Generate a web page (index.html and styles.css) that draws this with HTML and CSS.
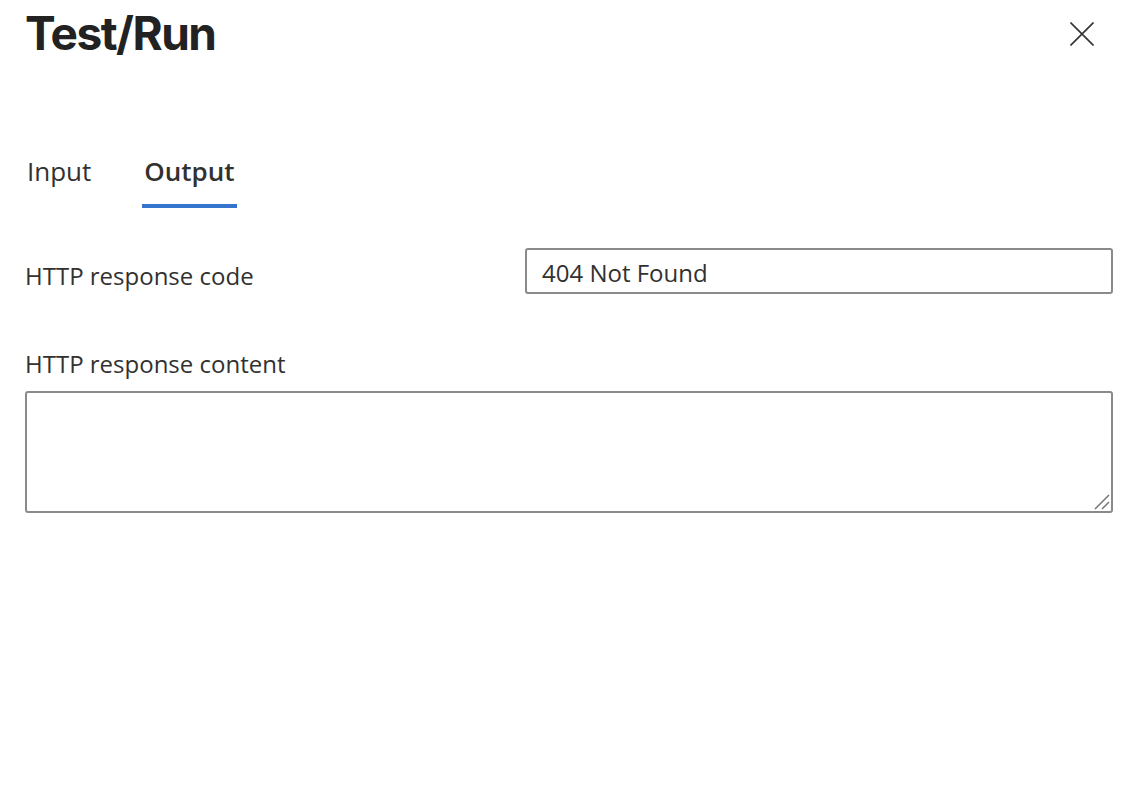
FILE: index.html
```html
<!DOCTYPE html>
<html>
<head>
<meta charset="utf-8">
<link rel="stylesheet" href="styles.css">
</head>
<body>
<div class="panel">
  <header class="header">
    <h1 class="title">Test/Run</h1>
    <button class="close" aria-label="Close">
      <svg width="24" height="24" viewBox="0 0 24 24"><path d="M0.5 0.5 L23.5 23.5 M23.5 0.5 L0.5 23.5" stroke="#333" stroke-width="1.6" fill="none"/></svg>
    </button>
  </header>
  <nav class="tabs">
    <div class="tab">Input</div>
    <div class="tab active">Output</div>
  </nav>
  <div class="row">
    <label class="label">HTTP response code</label>
    <div class="field">404 Not Found</div>
  </div>
  <div class="block">
    <label class="label">HTTP response content</label>
    <div class="area-wrap">
      <textarea class="area"></textarea>
      <svg class="grip" width="16" height="16" viewBox="0 0 16 16"><path d="M1 15 L15 1 M8 15 L15 8" stroke="#777" stroke-width="1.5" fill="none"/></svg>
    </div>
  </div>
</div>
</body>
</html>
```
FILE: styles.css
```css
html, body { margin: 0; padding: 0; background: #fff; }
body { font-family: "Open Sans", "Noto Sans", sans-serif; color: #323130; }
.panel { padding: 0 31px 0 25px; }
.header { display: flex; justify-content: space-between; align-items: flex-start; height: 100px; }
.title { margin: 0; padding-top: 4px; font-family: Inter, sans-serif; font-weight: 700; font-size: 46px; letter-spacing: -1.5px; line-height: 58px; color: #222; }
.close { border: 0; background: none; padding: 0; margin: 22px 19px 0 0; width: 24px; height: 24px; cursor: pointer; }
.tabs { display: flex; gap: 51px; margin-top: 53px; padding-left: 2px; }
.tab { font-size: 26px; line-height: 36px; padding-bottom: 14px; color: #323130; }
.tab.active { font-weight: 600; border-bottom: 4px solid #3574cc; padding: 0 2px 15px; }
.row { display: grid; grid-template-columns: 500px 1fr; align-items: start; margin-top: 40px; }
.row .label { padding-top: 12px; }
.label { font-size: 24px; line-height: 32px; color: #323130; }
.field { height: 42px; border: 2px solid #8a8a8a; border-radius: 3px; font-size: 24px; line-height: 46px; padding: 0 15px; box-sizing: content-box; overflow: hidden; }
.block { margin-top: 54px; display: flex; flex-direction: column; gap: 11px; }
.area-wrap { position: relative; }
.area { display: block; width: 100%; height: 122px; border: 2px solid #8a8a8a; border-radius: 3px; box-sizing: border-box; resize: none; font-size: 24px; margin: 0; }
.grip { position: absolute; right: 3px; bottom: 3px; }
```
